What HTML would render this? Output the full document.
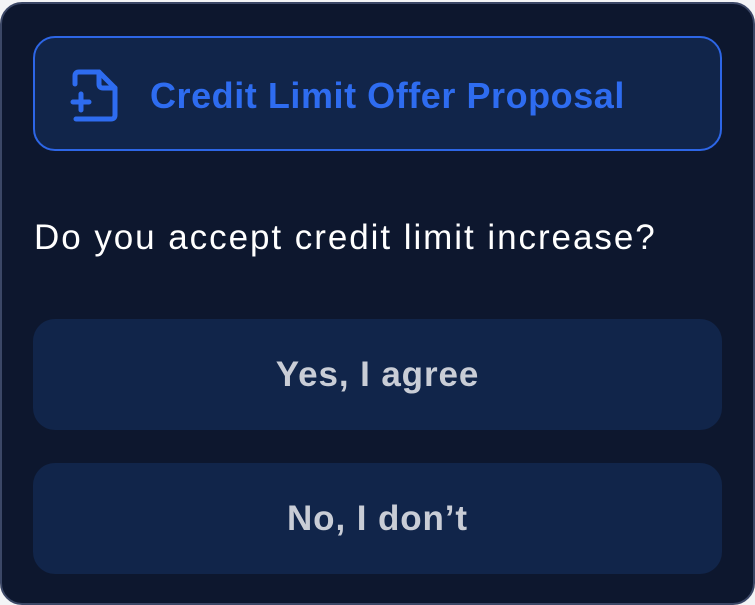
<!DOCTYPE html>
<html><head><style>
html,body{margin:0;padding:0;width:755px;height:605px;background:#f3f4f6;overflow:hidden;font-family:"Liberation Sans",sans-serif}
.card{position:absolute;left:0;top:2px;width:751px;height:599px;background:#0d172e;border:2px solid #3b4766;border-radius:22px}
.hdr{position:absolute;left:33px;top:36px;width:685px;height:111px;border:2px solid #2d66e6;border-radius:22px;background:#11254a;box-sizing:content-box}
.hdr svg{position:absolute;left:34px;top:29px}
.hdr span{position:absolute;left:115px;top:37px;font-size:36px;font-weight:bold;color:#2e6cf0;letter-spacing:0.55px;white-space:nowrap}
.q{position:absolute;left:34px;top:218px;font-size:35px;color:#fff;white-space:nowrap;letter-spacing:1.95px}
.btn{position:absolute;left:33px;width:689px;height:111px;border-radius:22px;background:#11254a;color:#c9cdd6;font-size:35px;font-weight:bold;text-align:center;line-height:111px;letter-spacing:0.9px}
</style></head><body>
<div class="card"></div>
<div class="hdr">
<svg width="50" height="56" viewBox="0 0 50 56" fill="none" stroke="#2e6cf0" stroke-width="5" stroke-linecap="round" stroke-linejoin="round">
<path d="M6 17 V9 Q6 5 10 5 H30 L46 21 V48 Q46 52 42 52 H7"/>
<path d="M30 5 V17 Q30 21 34 21 H46"/>
<path d="M12 27 V43 M4 35 H20"/>
</svg>
<span>Credit Limit Offer Proposal</span>
</div>
<div class="q">Do you accept credit limit increase?</div>
<div class="btn" style="top:319px">Yes, I agree</div>
<div class="btn" style="top:463px">No, I don’t</div>
</body></html>
